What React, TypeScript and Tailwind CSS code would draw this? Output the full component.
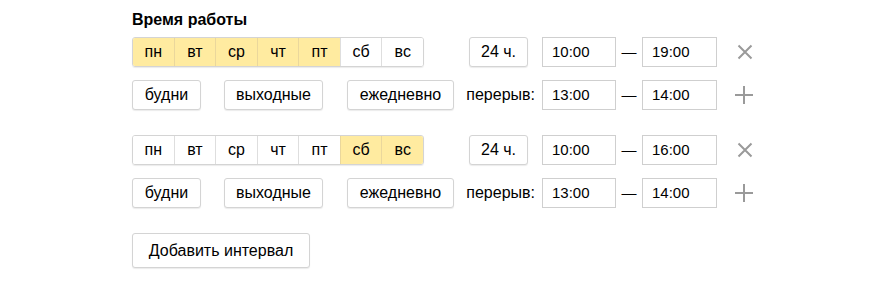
import { useState } from 'react';

const DAYS = ['пн', 'вт', 'ср', 'чт', 'пт', 'сб', 'вс'];

type Interval = {
  days: boolean[];
  from: string;
  to: string;
  breakFrom: string;
  breakTo: string;
};

const initial: Interval[] = [
  { days: [true, true, true, true, true, false, false], from: '10:00', to: '19:00', breakFrom: '13:00', breakTo: '14:00' },
  { days: [false, false, false, false, false, true, true], from: '10:00', to: '16:00', breakFrom: '13:00', breakTo: '14:00' },
];

function Btn({ children, className = '' }: { children: React.ReactNode; className?: string }) {
  return (
    <button
      className={`h-[30px] rounded-[3px] border border-[#d4d4d4] bg-white text-[16px] text-black shadow-[0_1px_1px_rgba(0,0,0,0.08)] ${className}`}
    >
      {children}
    </button>
  );
}

function TimeInput({ value }: { value: string }) {
  return (
    <div className="flex h-[30px] items-center border border-[#cfcfcf] bg-white pl-[9px] text-[15px] text-black">
      {value}
    </div>
  );
}

function Dash() {
  return <div className="flex w-[26px] justify-center text-[15px] text-black">—</div>;
}

function IntervalRows({ item, onToggle }: { item: Interval; onToggle: (i: number) => void }) {
  return (
    <div className="flex flex-col gap-[13px]">
      <div className="flex items-center">
        <div className="flex h-[30px] w-[292px] overflow-hidden rounded-[3px] border border-[#d4d4d4] shadow-[0_1px_1px_rgba(0,0,0,0.08)]">
          {DAYS.map((d, i) => (
            <button
              key={d}
              onClick={() => onToggle(i)}
              className={`flex-1 text-[16px] text-black ${i > 0 ? 'border-l' : ''} ${
                item.days[i] ? 'border-[#ead79c] bg-[#ffeba0]' : 'border-[#dedede] bg-white'
              }`}
            >
              {d}
            </button>
          ))}
        </div>
        <Btn className="ml-[45px] w-[59px]">24 ч.</Btn>
        <div className="ml-[14px] w-[74px]">
          <TimeInput value={item.from} />
        </div>
        <Dash />
        <div className="w-[75px]">
          <TimeInput value={item.to} />
        </div>
        <svg className="ml-[20px]" width="16" height="16" viewBox="0 0 16 16">
          <path d="M1.5 1.5 L14.5 14.5 M14.5 1.5 L1.5 14.5" stroke="#9a9a9a" strokeWidth="2" />
        </svg>
      </div>
      <div className="flex items-center">
        <Btn className="w-[69px]">будни</Btn>
        <Btn className="ml-[23px] w-[99px]">выходные</Btn>
        <Btn className="ml-[24px] w-[107px]">ежедневно</Btn>
        <div className="flex w-[88px] justify-end pr-[7px] text-[16px] text-black">перерыв:</div>
        <div className="w-[74px]">
          <TimeInput value={item.breakFrom} />
        </div>
        <Dash />
        <div className="w-[75px]">
          <TimeInput value={item.breakTo} />
        </div>
        <svg className="ml-[18px]" width="18" height="18" viewBox="0 0 18 18">
          <path d="M9 0 V18 M0 9 H18" stroke="#9a9a9a" strokeWidth="2" />
        </svg>
      </div>
    </div>
  );
}

export default function App() {
  const [items, setItems] = useState<Interval[]>(initial);

  function toggle(idx: number, day: number) {
    setItems((prev) =>
      prev.map((it, i) =>
        i === idx ? { ...it, days: it.days.map((v, j) => (j === day ? !v : v)) } : it
      )
    );
  }

  return (
    <div className="min-h-[297px] bg-white pl-[132px] pt-[10px] font-['Liberation_Sans',Arial,sans-serif]">
      <div className="text-[16px] font-bold leading-[19px] text-black">Время работы</div>
      <div className="mt-[8px] flex flex-col gap-[25px]">
        {items.map((it, i) => (
          <IntervalRows key={i} item={it} onToggle={(d) => toggle(i, d)} />
        ))}
        <Btn className="h-[35px] w-[178px]">Добавить интервал</Btn>
      </div>
    </div>
  );
}
